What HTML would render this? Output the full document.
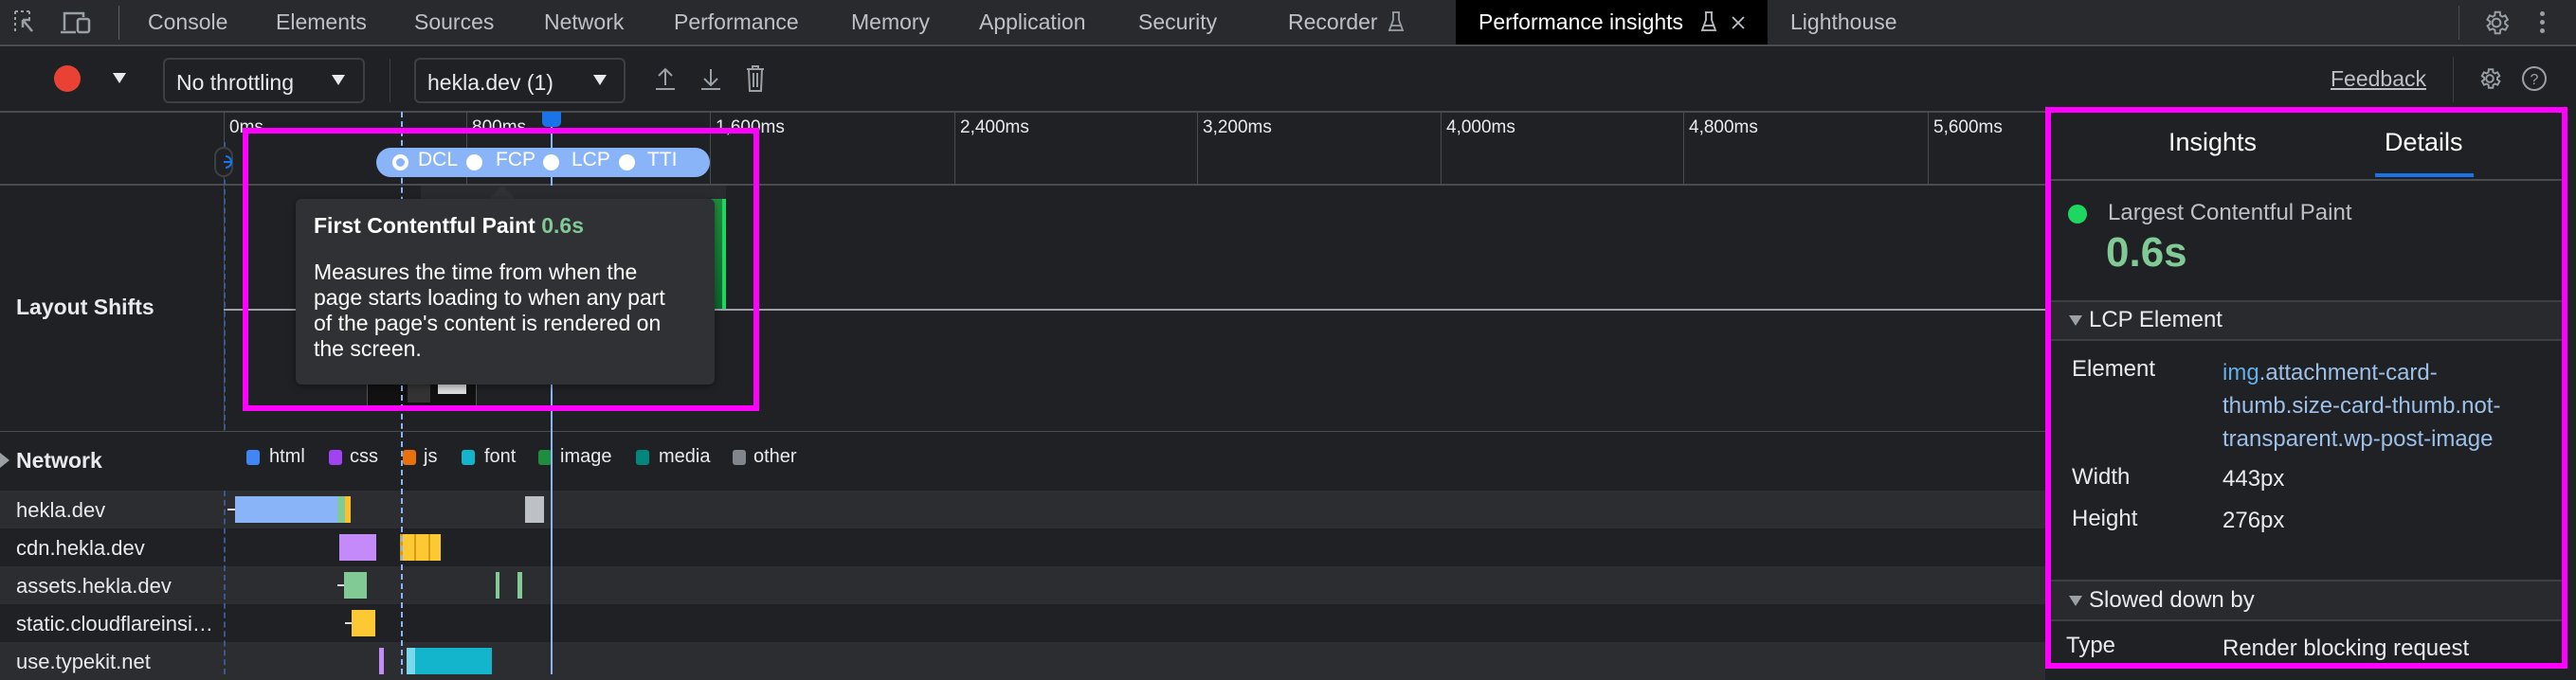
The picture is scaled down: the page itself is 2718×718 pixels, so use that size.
<!DOCTYPE html>
<html><head><meta charset="utf-8">
<style>
*{margin:0;padding:0;box-sizing:border-box}
body{width:2718px;height:712px;overflow:hidden;background:#202124;font-family:"Liberation Sans",Arial,sans-serif;color:#e8eaed;position:relative}
.a{position:absolute}
.tab{position:absolute;top:10px;font-size:23px;color:#bdc1c6;white-space:nowrap}
.vl{position:absolute;width:1px;background:#4a4c50}
.hl{position:absolute;height:2px;background:#4a4c50}
.tick{position:absolute;top:124px;font-size:19px;color:#e8eaed}
.row{position:absolute;left:0;width:2158px;height:40px}
.rl{position:absolute;left:17px;top:8px;font-size:22px;color:#e8eaed;white-space:nowrap}
.bar{position:absolute;top:6px;height:28px}
.lg{position:absolute;top:475px;width:14px;height:16px;border-radius:3px}
.lt{position:absolute;top:471px;font-size:20px;color:#e8eaed}
.sel{position:absolute;top:61px;height:48px;border:2px solid #3c4043;border-radius:6px;font-size:23px;color:#e8eaed;padding:11px 12px}
.rp{font-size:24px}
</style></head><body>
<!-- tab bar -->
<div class="a" style="left:0;top:0;width:2718px;height:48px;background:#292a2d"></div>
<div class="hl" style="left:0;top:47px;width:2718px;background:#4a4c50"></div>
<svg class="a" style="left:14px;top:10px" width="26" height="28" viewBox="0 0 26 28"><path d="M2 2h3M8 2h3M14 2h3M2 2v3M2 8v3M2 14v3M2 20v3M17 2v3M17 8v3" stroke="#9aa0a6" stroke-width="2"/><path d="M10 11l10 12M10 11v8M10 11h8" stroke="#9aa0a6" stroke-width="2.5" fill="none"/></svg>
<svg class="a" style="left:64px;top:10px" width="34" height="28" viewBox="0 0 34 28"><path d="M4 22V4h20v4" stroke="#9aa0a6" stroke-width="2.5" fill="none"/><rect x="18" y="10" width="12" height="14" rx="2" stroke="#9aa0a6" stroke-width="2.5" fill="none"/><path d="M0 24h16" stroke="#9aa0a6" stroke-width="2.5"/></svg>
<div class="vl" style="left:125px;top:6px;height:36px;background:#5f6368"></div>
<div class="tab" style="left:156px">Console</div>
<div class="tab" style="left:291px">Elements</div>
<div class="tab" style="left:437px">Sources</div>
<div class="tab" style="left:574px">Network</div>
<div class="tab" style="left:711px">Performance</div>
<div class="tab" style="left:898px">Memory</div>
<div class="tab" style="left:1033px">Application</div>
<div class="tab" style="left:1201px">Security</div>
<div class="tab" style="left:1359px">Recorder</div>
<svg class="a" style="left:1464px;top:11px" width="18" height="24" viewBox="0 0 18 24"><path d="M5 2h8M6 2v8L2 21h14L12 10V2M4 16h10" stroke="#9aa0a6" stroke-width="1.8" fill="none"/></svg>
<div class="a" style="left:1536px;top:0;width:329px;height:47px;background:#000"></div>
<div class="tab" style="left:1560px;color:#fff">Performance insights</div>
<svg class="a" style="left:1794px;top:11px" width="18" height="24" viewBox="0 0 18 24"><path d="M5 2h8M6 2v8L2 21h14L12 10V2M4 16h10" stroke="#bdc1c6" stroke-width="1.8" fill="none"/></svg>
<svg class="a" style="left:1826px;top:16px" width="16" height="16"><path d="M2 2l12 12M14 2L2 14" stroke="#bdc1c6" stroke-width="1.8"/></svg>
<div class="tab" style="left:1889px">Lighthouse</div>
<div class="vl" style="left:2594px;top:6px;height:36px;background:#4a4c50"></div>
<svg class="a" style="left:2619px;top:9px" width="30" height="30" viewBox="0 0 24 24"><path d="M12 8.5a3.5 3.5 0 1 0 0 7a3.5 3.5 0 1 0 0-7zM19.4 13a7.5 7.5 0 0 0 0-2l2.1-1.6-2-3.5-2.5 1a7 7 0 0 0-1.7-1L15 3h-4l-.4 2.9a7 7 0 0 0-1.7 1l-2.5-1-2 3.5L6.6 11a7.5 7.5 0 0 0 0 2l-2.1 1.6 2 3.5 2.5-1a7 7 0 0 0 1.7 1L11 21h4l.4-2.9a7 7 0 0 0 1.7-1l2.5 1 2-3.5z" fill="none" stroke="#9aa0a6" stroke-width="1.6"/></svg>
<div class="a" style="left:2680px;top:12px;width:5px;height:5px;border-radius:50%;background:#9aa0a6;box-shadow:0 9px 0 #9aa0a6,0 18px 0 #9aa0a6"></div>

<!-- toolbar -->
<div class="hl" style="left:0;top:117px;width:2718px"></div>
<div class="a" style="left:57px;top:69px;width:28px;height:28px;border-radius:50%;background:#e94235"></div>
<div class="a" style="left:119px;top:77px;width:0;height:0;border-left:7px solid transparent;border-right:7px solid transparent;border-top:11px solid #e8eaed"></div>
<div class="sel" style="left:172px;width:213px">No throttling</div>
<div class="a" style="left:350px;top:79px;border-left:7px solid transparent;border-right:7px solid transparent;border-top:11px solid #e8eaed"></div>
<div class="vl" style="left:411px;top:62px;height:46px;background:#3c4043"></div>
<div class="sel" style="left:437px;width:223px">hekla.dev (1)</div>
<div class="a" style="left:626px;top:79px;border-left:7px solid transparent;border-right:7px solid transparent;border-top:11px solid #e8eaed"></div>
<svg class="a" style="left:690px;top:70px" width="24" height="26"><path d="M12 20V3M5 10l7-7 7 7M2 24h20" stroke="#9aa0a6" stroke-width="2" fill="none"/></svg>
<svg class="a" style="left:738px;top:70px" width="24" height="26"><path d="M12 3v17M5 13l7 7 7-7M2 24h20" stroke="#9aa0a6" stroke-width="2" fill="none"/></svg>
<svg class="a" style="left:786px;top:68px" width="22" height="30"><path d="M2 5h18M8 5V2h6v3M4 5l1 23h12l1-23M9 9v15M13 9v15" stroke="#9aa0a6" stroke-width="2" fill="none"/></svg>
<div class="a" style="left:2459px;top:70px;font-size:23px;color:#bdc1c6;text-decoration:underline">Feedback</div>
<div class="vl" style="left:2588px;top:60px;height:48px;background:#3c4043"></div>
<svg class="a" style="left:2614px;top:70px" width="26" height="26" viewBox="0 0 24 24"><path d="M12 8.5a3.5 3.5 0 1 0 0 7a3.5 3.5 0 1 0 0-7zM19.4 13a7.5 7.5 0 0 0 0-2l2.1-1.6-2-3.5-2.5 1a7 7 0 0 0-1.7-1L15 3h-4l-.4 2.9a7 7 0 0 0-1.7 1l-2.5-1-2 3.5L6.6 11a7.5 7.5 0 0 0 0 2l-2.1 1.6 2 3.5 2.5-1a7 7 0 0 0 1.7 1L11 21h4l.4-2.9a7 7 0 0 0 1.7-1l2.5 1 2-3.5z" fill="none" stroke="#9aa0a6" stroke-width="1.8"/></svg>
<svg class="a" style="left:2660px;top:69px" width="28" height="28"><circle cx="14" cy="14" r="12" stroke="#9aa0a6" stroke-width="2" fill="none"/><text x="14" y="20" text-anchor="middle" font-size="16" fill="#9aa0a6" font-family="Liberation Sans">?</text></svg>

<!-- timeline grid -->
<div class="hl" style="left:0;top:194px;width:2158px"></div>
<div class="vl" style="left:236px;top:118px;height:594px;background:#4a4c50"></div>
<div class="vl" style="left:492px;top:118px;height:77px"></div>
<div class="vl" style="left:749px;top:118px;height:77px"></div>
<div class="vl" style="left:1007px;top:118px;height:77px"></div>
<div class="vl" style="left:1263px;top:118px;height:77px"></div>
<div class="vl" style="left:1520px;top:118px;height:77px"></div>
<div class="vl" style="left:1776px;top:118px;height:77px"></div>
<div class="vl" style="left:2034px;top:118px;height:77px"></div>
<div class="tick" style="left:242px">0ms</div>
<div class="tick" style="left:498px">800ms</div>
<div class="tick" style="left:755px">1,600ms</div>
<div class="tick" style="left:1013px">2,400ms</div>
<div class="tick" style="left:1269px">3,200ms</div>
<div class="tick" style="left:1526px">4,000ms</div>
<div class="tick" style="left:1782px">4,800ms</div>
<div class="tick" style="left:2040px">5,600ms</div>

<!-- layout shifts -->
<div class="hl" style="left:236px;top:326px;width:1922px;background:#9aa0a6"></div>
<div class="a" style="left:17px;top:311px;font-size:23px;font-weight:bold;color:#e8eaed">Layout Shifts</div>
<div class="hl" style="left:0;top:455px;width:2158px"></div>
<div class="a" style="left:750px;top:210px;width:16px;height:116px;background:linear-gradient(#1e8e3e,#0d652d);border-right:4px solid #1ed760"></div>
<div class="a" style="left:387px;top:404px;width:116px;height:27px;background:#111;border:1px solid #555"></div>
<div class="a" style="left:462px;top:404px;width:30px;height:12px;background:#ddd"></div>
<div class="a" style="left:430px;top:405px;width:24px;height:20px;background:#333"></div>

<!-- dashed lines -->
<div class="a" style="left:236px;top:150px;height:562px;border-left:2px dashed #3a5a8c"></div>
<div class="a" style="left:423px;top:118px;height:594px;border-left:2px dashed #8ab4f8"></div>
<div class="a" style="left:581px;top:118px;width:2px;height:594px;background:#8ab4f8"></div>
<div class="a" style="left:572px;top:118px;width:20px;height:16px;border-radius:0 0 5px 5px;background:#1a73e8"></div>
<div class="a" style="left:226px;top:155px;width:20px;height:32px;border:2px solid #3c4043;border-radius:12px;background:#202124"></div>
<svg class="a" style="left:236px;top:163px" width="12" height="16"><path d="M2 2a6 6 0 0 1 0 12M0 8h7" stroke="#1a73e8" stroke-width="2" fill="none"/></svg>

<!-- pill -->
<div class="a" style="left:397px;top:156px;width:352px;height:31px;border-radius:16px;background:#8ab4f8"></div>
<div class="a" style="left:414px;top:163px;width:17px;height:17px;border-radius:50%;border:4px solid #fff"></div>
<div class="a" style="left:441px;top:157px;font-size:21px;color:#fff">DCL</div>
<div class="a" style="left:492px;top:163px;width:17px;height:17px;border-radius:50%;background:#fff"></div>
<div class="a" style="left:523px;top:157px;font-size:21px;color:#fff">FCP</div>
<div class="a" style="left:573px;top:163px;width:17px;height:17px;border-radius:50%;background:#fff"></div>
<div class="a" style="left:603px;top:157px;font-size:21px;color:#fff">LCP</div>
<div class="a" style="left:653px;top:163px;width:17px;height:17px;border-radius:50%;background:#fff"></div>
<div class="a" style="left:683px;top:157px;font-size:21px;color:#fff">TTI</div>

<!-- tooltip -->
<div class="a" style="left:444px;top:196px;width:322px;height:14px;background:#2a2b2e"></div>
<div class="a" style="left:516px;top:196px;border-left:14px solid transparent;border-right:14px solid transparent;border-bottom:14px solid #303134"></div>
<div class="a" style="left:312px;top:210px;width:442px;height:196px;background:#303134;border-radius:6px;box-shadow:0 2px 8px rgba(0,0,0,.4)"></div>
<div class="a" style="left:331px;top:225px;font-size:23px;font-weight:bold;color:#fff;white-space:nowrap">First Contentful Paint <span style="color:#81c995">0.6s</span></div>
<div class="a" style="left:331px;top:274px;font-size:23px;line-height:27px;color:#fff;white-space:nowrap">Measures the time from when the<br>page starts loading to when any part<br>of the page's content is rendered on<br>the screen.</div>

<!-- network -->
<div class="a" style="left:0;top:456px;width:2158px;height:62px;background:#202124"></div>
<div class="a" style="left:0;top:478px;border-top:8px solid transparent;border-bottom:8px solid transparent;border-left:10px solid #9aa0a6"></div>
<div class="a" style="left:17px;top:473px;font-size:23px;font-weight:bold;color:#e8eaed">Network</div>
<div class="lg" style="left:260px;background:#4285f4"></div><div class="lt" style="left:284px">html</div>
<div class="lg" style="left:347px;background:#a142f4"></div><div class="lt" style="left:369px">css</div>
<div class="lg" style="left:425px;background:#e8710a"></div><div class="lt" style="left:447px">js</div>
<div class="lg" style="left:487px;background:#12b5cb"></div><div class="lt" style="left:511px">font</div>
<div class="lg" style="left:568px;background:#1e8e3e"></div><div class="lt" style="left:591px">image</div>
<div class="lg" style="left:671px;background:#01877e"></div><div class="lt" style="left:695px">media</div>
<div class="lg" style="left:773px;background:#80868b"></div><div class="lt" style="left:795px">other</div>

<div class="row" style="top:518px;background:#2c2d30"><div class="rl">hekla.dev</div>
<div class="bar" style="left:240px;top:19px;width:10px;height:2px;background:#ddd"></div>
<div class="bar" style="left:248px;width:108px;background:#8ab4f8"></div>
<div class="bar" style="left:356px;width:8px;background:#81c995"></div>
<div class="bar" style="left:364px;width:6px;background:#fbc02d"></div>
<div class="bar" style="left:554px;width:20px;background:#bdc1c6"></div></div>
<div class="row" style="top:558px;background:#202124"><div class="rl">cdn.hekla.dev</div>
<div class="bar" style="left:358px;width:39px;background:#c58af9"></div>
<div class="bar" style="left:422px;width:43px;background:#fcc934;border-left:3px solid #d99a14"></div>
<div class="bar" style="left:437px;width:2px;background:#d99a14"></div>
<div class="bar" style="left:452px;width:2px;background:#d99a14"></div></div>
<div class="row" style="top:598px;background:#2c2d30"><div class="rl">assets.hekla.dev</div>
<div class="bar" style="left:356px;top:19px;width:8px;height:2px;background:#ddd"></div>
<div class="bar" style="left:363px;width:24px;background:#81c995"></div>
<div class="bar" style="left:523px;width:4px;background:#81c995"></div>
<div class="bar" style="left:546px;width:5px;background:#81c995"></div></div>
<div class="row" style="top:638px;background:#202124"><div class="rl">static.cloudflareinsi…</div>
<div class="bar" style="left:364px;top:19px;width:8px;height:2px;background:#ddd"></div>
<div class="bar" style="left:371px;width:25px;background:#fcc934"></div></div>
<div class="row" style="top:678px;background:#2c2d30"><div class="rl">use.typekit.net</div>
<div class="bar" style="left:400px;width:5px;background:#c58af9"></div>
<div class="bar" style="left:429px;width:9px;background:#78d9ec"></div>
<div class="bar" style="left:438px;width:81px;background:#12b5cb"></div></div>
<div class="a" style="left:236px;top:518px;height:194px;border-left:2px dashed #3a5a8c"></div>
<div class="a" style="left:423px;top:456px;height:256px;border-left:2px dashed #8ab4f8"></div>
<div class="a" style="left:581px;top:456px;width:2px;height:256px;background:#8ab4f8"></div>

<!-- right panel -->
<div class="a" style="left:2158px;top:113px;width:560px;height:599px;background:#202124"></div>
<div class="a" style="left:2288px;top:135px;font-size:27px;color:#fff">Insights</div>
<div class="a" style="left:2516px;top:135px;font-size:27px;color:#fff">Details</div>
<div class="a" style="left:2506px;top:183px;width:104px;height:4px;background:#1a73e8"></div>
<div class="hl" style="left:2164px;top:189px;width:544px"></div>
<div class="a" style="left:2182px;top:216px;width:20px;height:20px;border-radius:50%;background:#1ed760"></div>
<div class="a rp" style="left:2224px;top:211px;color:#bdc1c6">Largest Contentful Paint</div>
<div class="a" style="left:2222px;top:242px;font-size:44px;font-weight:bold;color:#81c995">0.6s</div>
<div class="a" style="left:2164px;top:317px;width:544px;height:43px;background:#292a2d;border-top:2px solid #3c4043;border-bottom:2px solid #3c4043"></div>
<div class="a" style="left:2183px;top:333px;border-left:7px solid transparent;border-right:7px solid transparent;border-top:11px solid #9aa0a6"></div>
<div class="a rp" style="left:2204px;top:324px;color:#e8eaed">LCP Element</div>
<div class="a rp" style="left:2186px;top:376px;color:#e8eaed">Element</div>
<div class="a" style="left:2345px;top:376px;font-size:24px;line-height:35px;color:#9cc0e8;white-space:nowrap"><span style="color:#62b0e8">img</span>.attachment-card-<br>thumb.size-card-thumb.not-<br>transparent.wp-post-image</div>
<div class="a rp" style="left:2186px;top:490px;color:#e8eaed">Width</div>
<div class="a rp" style="left:2345px;top:492px;color:#e8eaed">443px</div>
<div class="a rp" style="left:2186px;top:534px;color:#e8eaed">Height</div>
<div class="a rp" style="left:2345px;top:536px;color:#e8eaed">276px</div>
<div class="a" style="left:2164px;top:612px;width:544px;height:44px;background:#292a2d;border-top:2px solid #3c4043;border-bottom:2px solid #3c4043"></div>
<div class="a" style="left:2183px;top:629px;border-left:7px solid transparent;border-right:7px solid transparent;border-top:11px solid #9aa0a6"></div>
<div class="a rp" style="left:2204px;top:620px;color:#e8eaed">Slowed down by</div>
<div class="a rp" style="left:2180px;top:668px;color:#e8eaed">Type</div>
<div class="a rp" style="left:2345px;top:671px;color:#e8eaed">Render blocking request</div>

<!-- magenta highlights -->
<div class="a" style="left:2158px;top:113px;width:551px;height:593px;border:6px solid #ff00ff"></div>
<div class="a" style="left:256px;top:135px;width:545px;height:299px;border:6px solid #ff00ff"></div>
</body></html>
